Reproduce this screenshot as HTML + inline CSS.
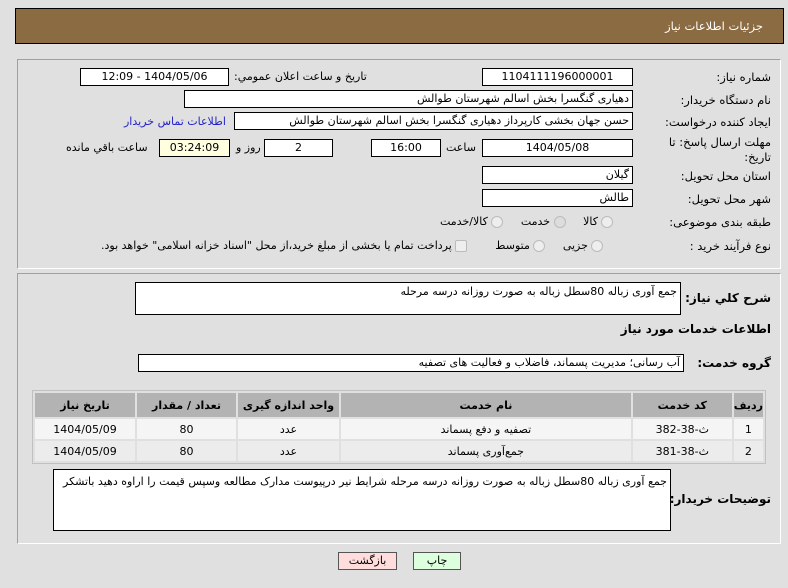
<!DOCTYPE html>
<html><head><meta charset="utf-8"><style>
*{box-sizing:border-box;margin:0;padding:0}
body{width:788px;height:588px;background:#e0e0e0;font-family:"DejaVu Sans","Liberation Sans",sans-serif;font-size:11px;color:#000;position:relative;overflow:hidden;direction:rtl}
.a{position:absolute;white-space:nowrap}
.box{position:absolute;background:#fff;border:1px solid #000;height:18px;line-height:16px;padding:0 3px;overflow:hidden}
.c{text-align:center}
.lbl{position:absolute;right:17px;white-space:nowrap;font-size:11.5px}
.b{font-weight:bold;font-size:12px}
.panel{position:absolute;border:1px solid #a0a0a0;border-right-color:#fff;border-bottom-color:#fff}
.rad{display:inline-block;width:12px;height:12px;border-radius:50%;border:1px solid #bbb;background:#eee;vertical-align:middle}
table{position:absolute;left:32px;top:390px;width:734px;border-collapse:separate;border-spacing:2px;background:#e0e0e0;border:1px solid #c0c0c0;font-size:11px}
th{background:#b3b3b3;height:24px;font-weight:bold}
td{height:20px;text-align:center}
tr.r1 td{background:#f5f5f5}tr.r2 td{background:#ececec}
</style></head><body>
<div class="a" style="left:15px;top:8px;width:769px;height:36px;background:#8b6b42;border:1px solid #000"></div>
<div class="a" style="right:25px;top:19px;color:#fff;font-size:11.5px">جزئیات اطلاعات نیاز</div>

<div class="panel" style="left:17px;top:59px;width:764px;height:210px"></div>
<div class="lbl" style="top:70px">شماره نیاز:</div>
<div class="box c" style="left:482px;top:68px;width:151px">1104111196000001</div>
<div class="a" style="left:234px;top:70px">تاریخ و ساعت اعلان عمومي:</div>
<div class="box c" style="left:80px;top:68px;width:149px">1404/05/06 - 12:09</div>
<div class="lbl" style="top:93px">نام دستگاه خریدار:</div>
<div class="box" style="left:184px;top:90px;width:449px">دهیاری گنگسرا بخش اسالم شهرستان طوالش</div>
<div class="lbl" style="top:115px">ایجاد کننده درخواست:</div>
<div class="box" style="left:234px;top:112px;width:399px">حسن جهان بخشی کارپرداز دهیاری گنگسرا بخش اسالم شهرستان طوالش</div>
<div class="a" style="left:124px;top:115px;color:#2222cc">اطلاعات تماس خریدار</div>
<div class="lbl" style="top:135px;line-height:15px">مهلت ارسال پاسخ: تا<br>تاریخ:</div>
<div class="box c" style="left:482px;top:139px;width:151px">1404/05/08</div>
<div class="a" style="left:446px;top:141px">ساعت</div>
<div class="box c" style="left:371px;top:139px;width:70px">16:00</div>
<div class="box c" style="left:264px;top:139px;width:69px">2</div>
<div class="a" style="left:236px;top:141px">روز و</div>
<div class="box c" style="left:159px;top:139px;width:71px;background:#ffffe0">03:24:09</div>
<div class="a" style="left:66px;top:141px">ساعت باقي مانده</div>
<div class="lbl" style="top:169px">استان محل تحویل:</div>
<div class="box" style="left:482px;top:166px;width:151px">گیلان</div>
<div class="lbl" style="top:192px">شهر محل تحویل:</div>
<div class="box" style="left:482px;top:189px;width:151px">طالش</div>
<div class="lbl" style="top:215px">طبقه بندی موضوعی:</div>
<div class="a" style="left:440px;top:215px"><span class="rad"></span> کالا &nbsp;&nbsp;&nbsp; <span class="rad" style="background:#ddd"></span> خدمت &nbsp;&nbsp;&nbsp; <span class="rad"></span> کالا/خدمت</div>
<div class="lbl" style="top:239px">نوع فرآیند خرید :</div>
<div class="a" style="left:101px;top:239px"><span class="rad"></span> جزیی &nbsp;&nbsp;&nbsp; <span class="rad"></span> متوسط &nbsp;&nbsp;&nbsp;&nbsp;&nbsp;&nbsp; <span class="rad" style="border-radius:2px"></span> پرداخت تمام یا بخشی از مبلغ خرید،از محل "اسناد خزانه اسلامی" خواهد بود.</div>

<div class="panel" style="left:17px;top:273px;width:764px;height:271px"></div>
<div class="lbl b" style="top:291px">شرح کلي نیاز:</div>
<div class="box" style="left:135px;top:282px;width:546px;height:33px;line-height:17px">جمع آوری زباله 80سطل زباله به صورت روزانه درسه مرحله</div>
<div class="lbl b" style="top:322px">اطلاعات خدمات مورد نیاز</div>
<div class="lbl b" style="top:356px">گروه خدمت:</div>
<div class="box" style="left:138px;top:354px;width:546px">آب رسانی؛ مدیریت پسماند، فاضلاب و فعالیت های تصفیه</div>
<table>
<tr><th style="width:25px">ردیف</th><th style="width:99px">کد خدمت</th><th>نام خدمت</th><th style="width:101px">واحد اندازه گیری</th><th style="width:99px">تعداد / مقدار</th><th style="width:100px">تاریخ نیاز</th></tr>
<tr class="r1"><td>1</td><td>ث-38-382</td><td>تصفیه و دفع پسماند</td><td>عدد</td><td>80</td><td>1404/05/09</td></tr>
<tr class="r2"><td>2</td><td>ث-38-381</td><td>جمع‌آوری پسماند</td><td>عدد</td><td>80</td><td>1404/05/09</td></tr>
</table>
<div class="lbl b" style="top:492px">توضیحات خریدار:</div>
<div class="box" style="left:53px;top:469px;width:618px;height:62px;white-space:normal;line-height:15px;padding-top:4px">جمع آوری زباله 80سطل زباله به صورت روزانه درسه مرحله شرایط نیر درپیوست مدارک مطالعه وسپس قیمت را اراوه دهید باتشکر</div>
<div class="a c" style="left:338px;top:552px;width:59px;height:18px;line-height:16px;background:#fdd;border:1px solid #555">بازگشت</div>
<div class="a c" style="left:413px;top:552px;width:48px;height:18px;line-height:16px;background:#dfd;border:1px solid #555">چاپ</div>
</body></html>
